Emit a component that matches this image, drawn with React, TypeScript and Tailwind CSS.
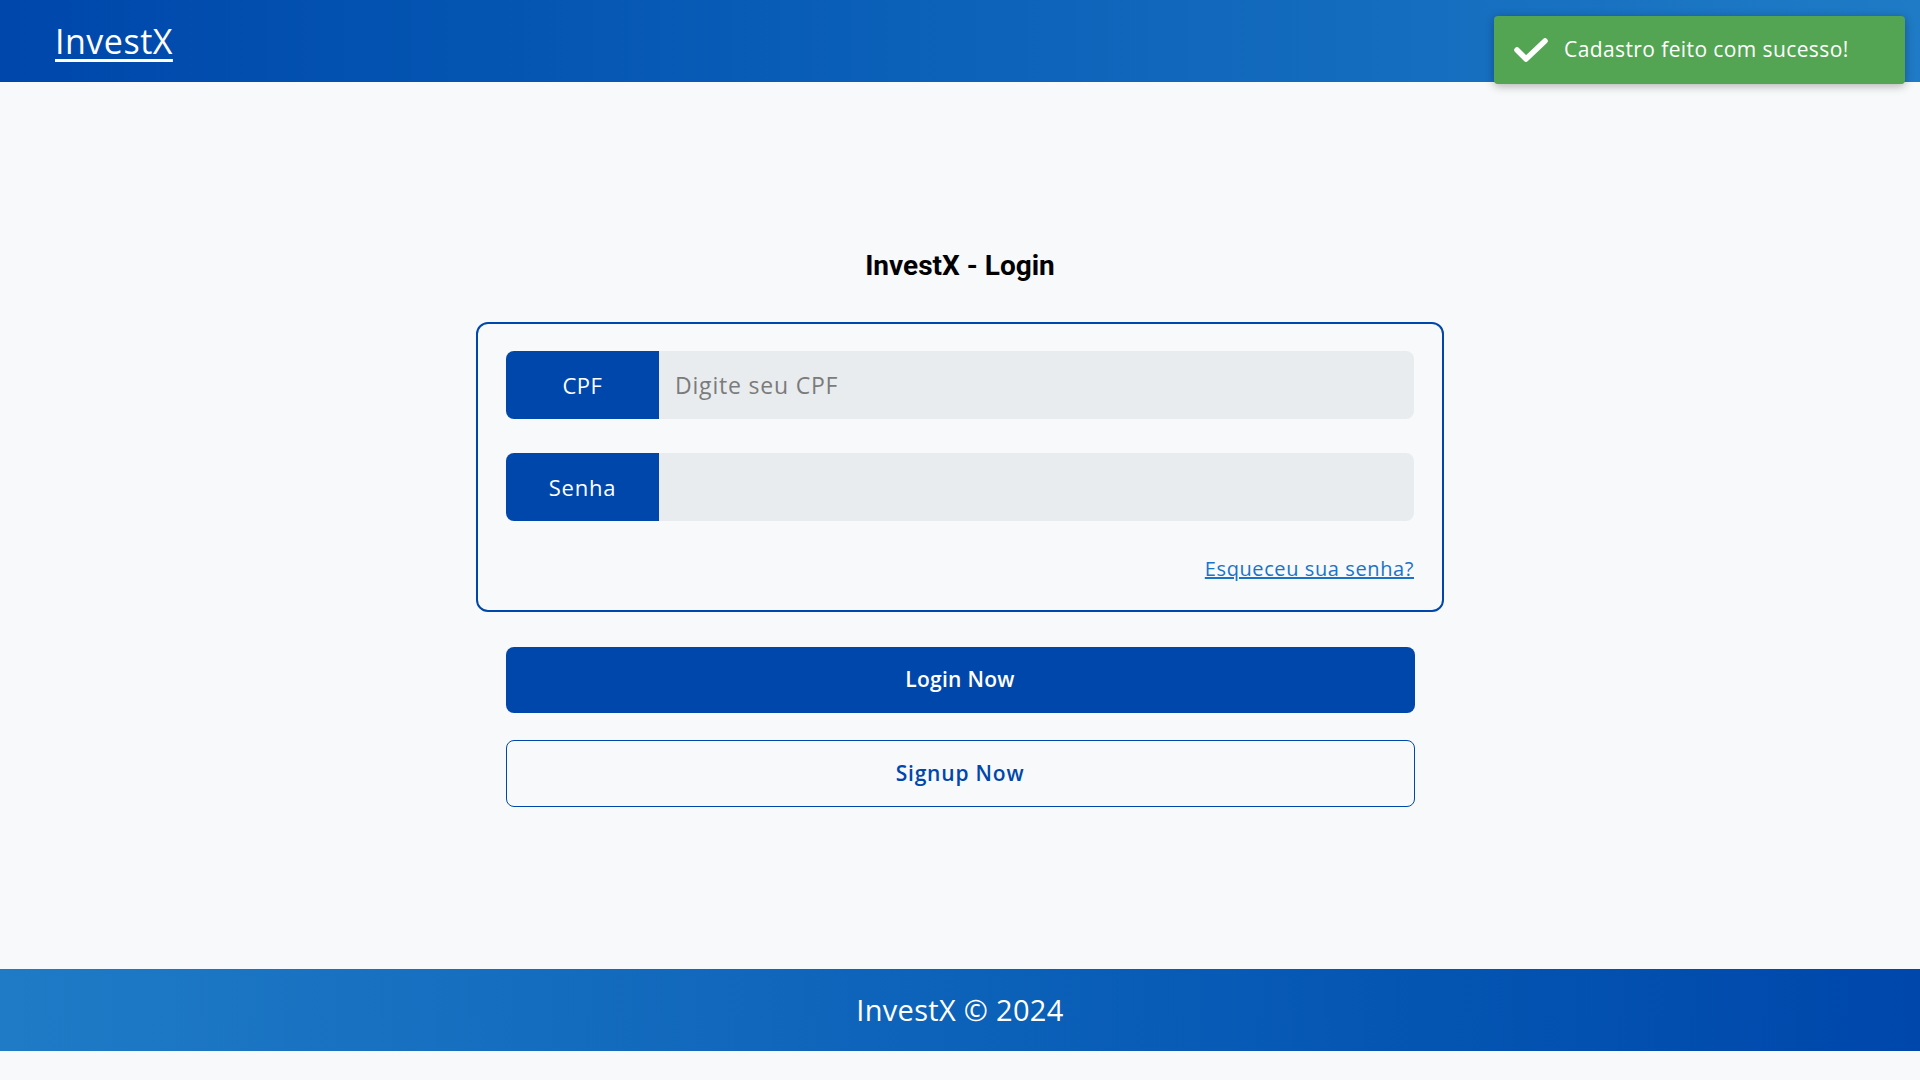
import { useState } from 'react';

export default function App() {
  const [cpf, setCpf] = useState('');
  const [senha, setSenha] = useState('');

  return (
    <div className="relative min-h-screen bg-[#f8f9fa] font-['Open_Sans',sans-serif]">
      {/* Header */}
      <header className="h-[82px] bg-gradient-to-r from-[#0047ab] to-[#1f7bc6] flex items-center px-[55px]">
        <a href="#" className="text-white text-[34px] tracking-[0.5px] underline underline-offset-[5px] decoration-[3px] leading-none">
          InvestX
        </a>
      </header>

      {/* Toast */}
      <div className="absolute top-4 right-[15px] w-[411px] h-[68px] bg-[#53a553] rounded-[4px] shadow-[0_2px_10px_rgba(0,0,0,0.3)] flex items-center pl-5 gap-4">
        <svg width="34" height="26" viewBox="0 0 34 26" fill="none">
          <path d="M3 13 L12 22 L31 4" stroke="white" strokeWidth="5.5" strokeLinecap="round" strokeLinejoin="round" />
        </svg>
        <span className="text-white text-[21px] tracking-[0.4px]">Cadastro feito com sucesso!</span>
      </div>

      {/* Main */}
      <main className="h-[887px] pt-[5px] flex flex-col items-center justify-center">
        <h1 className="font-['Roboto',sans-serif] font-bold text-[28px] text-black leading-[34px]">
          InvestX - Login
        </h1>

        <div className="mt-[39px] w-[968px] border-2 border-[#0047ab] rounded-[12px] px-[28px] pt-[27px] pb-[28px]">
          <div className="flex h-[68px]">
            <span className="w-[153px] bg-[#0047ab] text-white text-[22px] tracking-[0.5px] flex items-center justify-center rounded-l-[8px]">
              CPF
            </span>
            <input
              value={cpf}
              onChange={(e) => setCpf(e.target.value)}
              placeholder="Digite seu CPF"
              className="flex-1 bg-[#e9ecef] rounded-r-[8px] px-4 text-[23px] tracking-[0.8px] text-gray-800 placeholder:text-[#7b7b7b] outline-none"
            />
          </div>

          <div className="flex h-[68px] mt-[34px]">
            <span className="w-[153px] bg-[#0047ab] text-white text-[22px] tracking-[0.8px] flex items-center justify-center rounded-l-[8px]">
              Senha
            </span>
            <input
              type="password"
              value={senha}
              onChange={(e) => setSenha(e.target.value)}
              className="flex-1 bg-[#e9ecef] rounded-r-[8px] px-4 text-[21px] outline-none"
            />
          </div>

          <div className="flex justify-end mt-[35px]">
            <a href="#" className="text-[#1a73c8] text-[20px] tracking-[0.6px] underline leading-[26px]">
              Esqueceu sua senha?
            </a>
          </div>
        </div>

        <button className="mt-[35px] w-[909px] h-[66px] bg-[#0047ab] text-white text-[21px] tracking-[0.3px] font-semibold rounded-[8px]">
          Login Now
        </button>
        <button className="mt-[27px] w-[909px] h-[67px] border border-[#0047ab] text-[#0047ab] text-[21px] tracking-[0.8px] font-semibold rounded-[8px]">
          Signup Now
        </button>
      </main>

      {/* Footer */}
      <footer className="h-[82px] bg-gradient-to-r from-[#1f7bc6] to-[#0047ab] flex items-center justify-center">
        <span className="text-white text-[29px] tracking-[0.3px]">InvestX © 2024</span>
      </footer>
    </div>
  );
}
